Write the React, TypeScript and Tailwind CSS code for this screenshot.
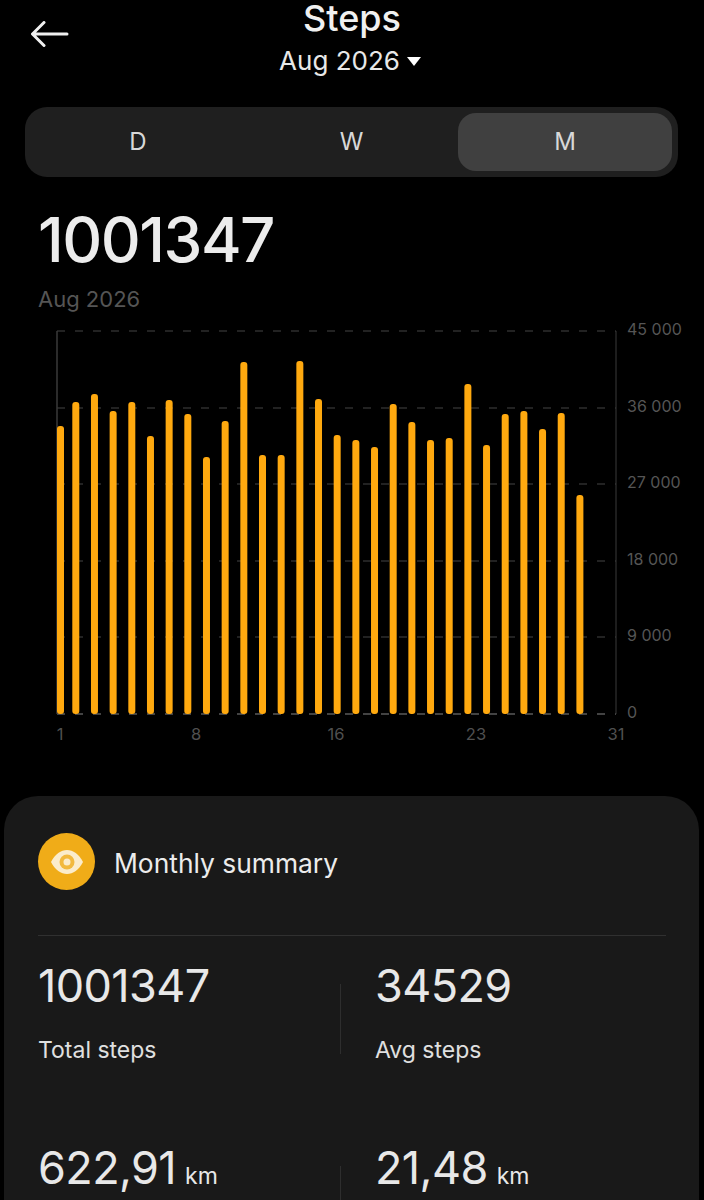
const tops = [426, 402, 394, 411, 402, 436, 400, 414, 457, 421, 362, 455, 455, 361, 399, 435, 440, 447, 404, 422, 440, 438, 384, 445, 414, 411, 429, 413, 495];

const gridLines = [
  { y: 331, label: "45 000" },
  { y: 408, label: "36 000" },
  { y: 484, label: "27 000" },
  { y: 561, label: "18 000" },
  { y: 637, label: "9 000" },
  { y: 714, label: "0" },
];

const dayLabels = [
  { x: 60, label: "1" },
  { x: 196, label: "8" },
  { x: 336, label: "16" },
  { x: 476, label: "23" },
  { x: 616, label: "31" },
];

const StepsChart = () => {
  return (
    <svg viewBox="0 320 704 430" className="block h-[430px] w-full">
      {gridLines.map((line) => (
        <line key={line.y} x1="57" x2="616" y1={line.y} y2={line.y} stroke={line.y === 714 ? "#5a5a5a" : "#2e2e2e"} strokeWidth="1.5" strokeDasharray="8 10" />
      ))}
      <line x1="57" x2="57" y1="331" y2="714" stroke="#3a3a3a" strokeWidth="1.5" />
      <line x1="616" x2="616" y1="331" y2="714" stroke="#3a3a3a" strokeWidth="1" />
      {tops.map((top, i) => {
        const x = i === 0 ? 57 : 72.3 + (i - 1) * 18.67;
        return <rect key={i} x={x} y={top} width="7" height={714 - top} rx="3" fill="#ffa90f" />;
      })}
      {gridLines.map((line) => (
        <text key={line.label} x="627" y={line.y + 4} fontSize="16" fill="#555555" fontFamily="Inter, sans-serif">
          {line.label}
        </text>
      ))}
      {dayLabels.map((day) => (
        <text key={day.label} x={day.x} y="740" fontSize="16.5" fill="#505050" textAnchor="middle" fontFamily="Inter, sans-serif">
          {day.label}
        </text>
      ))}
    </svg>
  );
};

interface StatProps {
  value: string;
  unit?: string;
  label?: string;
  withDivider?: boolean;
}

const Stat = ({ value, unit, label, withDivider }: StatProps) => {
  return (
    <div className="relative h-[182px]">
      {withDivider && <div className="absolute left-0 top-[23px] h-[70px] w-px bg-[#2e2e2e]" />}
      <div className={withDivider ? "pl-[35px]" : ""}>
        <div className="flex h-[50px] items-baseline text-[#e8e8e8]">
          <span className="text-[45px] leading-[50px] tracking-[-0.6px]">{value}</span>
          {unit && <span className="ml-[9px] text-[23px] leading-none">{unit}</span>}
        </div>
        {label && <div className="mt-[24px] text-[23px] leading-[30px] text-[#e0e0e0]">{label}</div>}
      </div>
    </div>
  );
};

export default function App() {
  return (
    <div className="h-[1200px] w-[704px] overflow-hidden bg-black font-['Inter',sans-serif] text-white">
      <header className="relative flex h-[107px] flex-col items-center">
        <button type="button" className="absolute left-[31px] top-[21px]">
          <svg width="38" height="26" viewBox="0 0 38 26" fill="none" stroke="#f0f0f0" strokeWidth="3" strokeLinecap="round" strokeLinejoin="round" className="block">
            <path d="M36 13H2M13 1.5 1.5 13 13 24.5" />
          </svg>
        </button>
        <h1 className="text-[36px] font-medium leading-[36px] text-[#f0f0f0]">Steps</h1>
        <div className="mt-[6px] flex items-center gap-[7px] pr-[4px] text-[26px] leading-[38px] text-[#e8e8e8]">
          <span>Aug 2026</span>
          <span className="h-0 w-0 border-x-[7px] border-t-[9px] border-x-transparent border-t-white" />
        </div>
      </header>

      <div className="ml-[25px] grid h-[70px] w-[653px] grid-cols-3 rounded-[22px] bg-[#1f1f1f] p-[6px] text-[24px] text-[#d8d8d8]">
        <div className="flex items-center justify-center">D</div>
        <div className="flex items-center justify-center">W</div>
        <div className="flex items-center justify-center rounded-[18px] bg-[#404040]">M</div>
      </div>

      <div className="px-[38px] pb-[6px] pt-[28px]">
        <div className="text-[62px] font-medium leading-[70px] tracking-[-1.5px] text-[#ececec]">1001347</div>
        <div className="mt-[9px] text-[22px] leading-[30px] text-[#555555]">Aug 2026</div>
      </div>

      <StepsChart />

      <section className="ml-[4px] mt-[46px] w-[695px] rounded-t-[34px] bg-[#191919] pl-[34px] pr-[33px] pt-[37px]">
        <div className="flex items-center gap-[19px] border-b border-[#303030] pb-[45px]">
          <div className="flex size-[57px] items-center justify-center rounded-full bg-[#f0ac18]">
            <svg width="34" height="26" viewBox="0 0 34 26" className="block">
              <path d="M1 13C5 5 11 1 17 1s12 4 16 12c-4 8-10 12-16 12S5 21 1 13Z" fill="#fbeccb" />
              <circle cx="17" cy="13" r="7.5" fill="#f2b93e" />
              <circle cx="17" cy="13" r="3.5" fill="#fbeccb" />
            </svg>
          </div>
          <h2 className="pt-[2px] text-[26.4px] leading-[36px] text-[#ececec]">Monthly summary</h2>
        </div>
        <div className="grid grid-cols-[302px_1fr] pt-[25px]">
          <Stat value="1001347" label="Total steps" />
          <Stat value="34529" label="Avg steps" withDivider />
          <Stat value="622,91" unit="km" />
          <Stat value="21,48" unit="km" withDivider />
        </div>
      </section>
    </div>
  );
}
